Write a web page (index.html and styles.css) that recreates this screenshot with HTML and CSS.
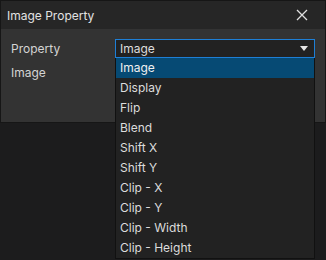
FILE: index.html
```html
<!DOCTYPE html>
<html>
<head>
<meta charset="utf-8">
<link rel="stylesheet" href="styles.css">
</head>
<body>
<div class="dialog">
  <div class="titlebar">
    <span class="title">Image Property</span>
    <svg class="close" width="12" height="12" viewBox="0 0 12 12"><path d="M1 1L11 11M11 1L1 11" stroke="#e0e0e0" stroke-width="1.3" fill="none"/></svg>
  </div>
  <div class="content">
    <div class="row">
      <span class="label">Property</span>
      <div class="select-wrap">
        <div class="select">
          <span>Image</span>
          <svg class="arrow" width="8" height="5" viewBox="0 0 8 5"><path d="M0 0H8L4 5Z" fill="#e6e6e6"/></svg>
        </div>
        <ul class="menu">
          <li class="active">Image</li>
          <li>Display</li>
          <li>Flip</li>
          <li>Blend</li>
          <li>Shift X</li>
          <li>Shift Y</li>
          <li>Clip - X</li>
          <li>Clip - Y</li>
          <li>Clip - Width</li>
          <li>Clip - Height</li>
        </ul>
      </div>
    </div>
    <div class="row">
      <span class="label">Image</span>
    </div>
  </div>
</div>
</body>
</html>
```
FILE: styles.css
```css
html, body {
  margin: 0;
  padding: 0;
}
body {
  background: #1c1c1d;
  font-family: Inter, "Noto Sans", sans-serif;
  font-size: 12px;
  color: #dcdcdc;
  width: 326px;
  height: 260px;
  overflow: hidden;
}
.dialog {
  box-sizing: border-box;
  width: 326px;
  height: 123px;
  border: 1px solid #161616;
  background: #333333;
}
.titlebar {
  height: 28px;
  background: #262626;
  display: flex;
  align-items: center;
  justify-content: space-between;
  padding: 0 17px 0 6px;
}
.title {
  color: #e2e2e2;
}
.content {
  padding: 10px 9px 0 10px;
  display: flex;
  flex-direction: column;
  gap: 5px;
}
.row {
  display: grid;
  grid-template-columns: 104px 200px;
  align-items: center;
  height: 19px;
}
.label {
  color: #d4d4d4;
}
.select-wrap {
  position: relative;
}
.select {
  box-sizing: border-box;
  height: 19px;
  border: 1px solid #1e7fd6;
  background: #222222;
  display: flex;
  align-items: center;
  justify-content: space-between;
  padding: 0 6px 0 4px;
  color: #dcdcdc;
}
.menu {
  position: absolute;
  top: 19px;
  left: 0;
  box-sizing: border-box;
  width: 200px;
  margin: 0;
  padding: 0;
  list-style: none;
  background: #222222;
  border: 1px solid #111111;
  border-top: none;
}
.menu li {
  height: 20px;
  line-height: 20px;
  padding-left: 4px;
  color: #dcdcdc;
}
.menu li.active {
  background: #064a74;
  color: #f0f0f0;
}
```
